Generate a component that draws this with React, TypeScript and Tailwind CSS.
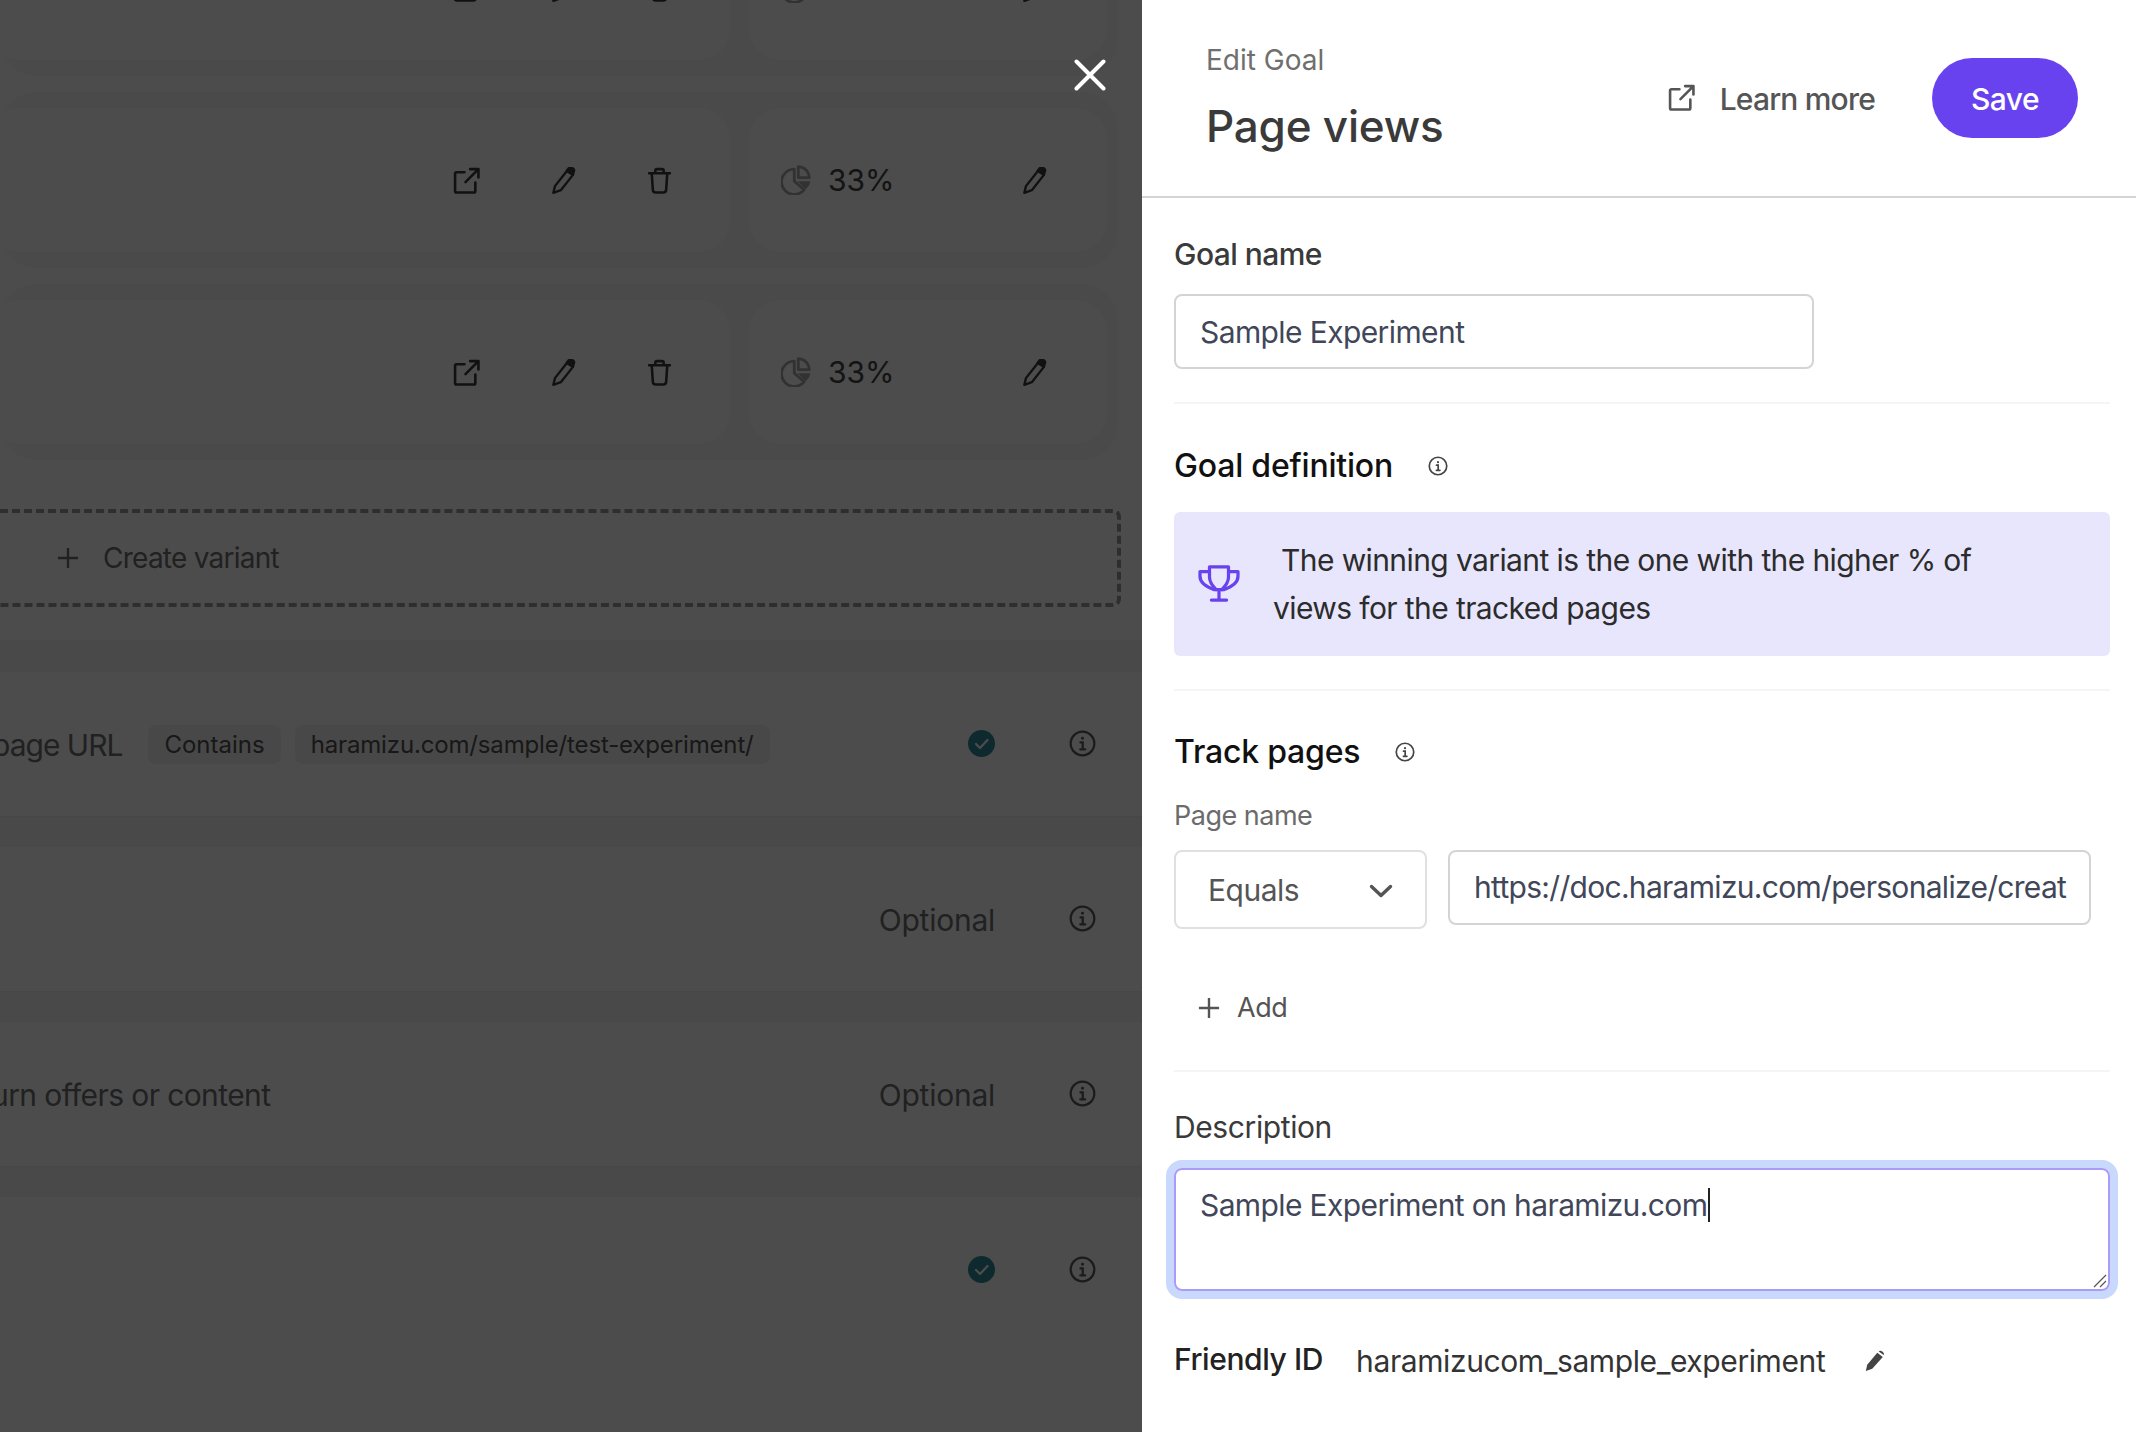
import React from 'react';

const PencilIcon = ({ className }: { className?: string }) => (
  <svg viewBox="0 0 24 24" className={className} fill="none" stroke="currentColor" strokeWidth="2.1" strokeLinejoin="round">
    <path d="M3 23 L4.4 17 L15 3.5 L20.4 7 L9.6 20.6 Z" />
    <path d="M15 3.2 L16.6 1.2 C17.4 .4 18.8 .3 20.2 1.1 C21.6 2 21.8 3.2 21 4.4 L20.4 7 Z" fill="currentColor" />
  </svg>
);

const ExternalIcon = ({ className }: { className?: string }) => (
  <svg viewBox="0 0 26 26" className={className} fill="none" stroke="currentColor" strokeWidth="2.5" strokeLinecap="round" strokeLinejoin="round">
    <path d="M11 5 H3.5 Q2 5 2 6.5 V23 Q2 24.5 3.5 24.5 H20 Q21.5 24.5 21.5 23 V15" />
    <path d="M12 14.5 L24 2.5 M16.5 2 H24.5 V10" />
  </svg>
);

const TrashIcon = ({ className }: { className?: string }) => (
  <svg viewBox="0 0 24 26" className={className} fill="none" stroke="currentColor" strokeWidth="2.5" strokeLinecap="round" strokeLinejoin="round">
    <path d="M2 6 H22 M8 6 V3.5 Q8 2 9.5 2 H14.5 Q16 2 16 3.5 V6" />
    <path d="M4.5 6 L5.6 22 Q5.8 24.5 8.2 24.5 H15.8 Q18.2 24.5 18.4 22 L19.5 6" />
  </svg>
);

const PieIcon = ({ className }: { className?: string }) => (
  <svg viewBox="0 0 26 26" className={className} fill="none" stroke="currentColor" strokeWidth="2.4" strokeLinejoin="round">
    <path d="M11.5 3.5 A11 11 0 1 0 20 21.5 L11.5 14 Z" />
    <path d="M15 1.5 A9.5 9.5 0 0 1 24.5 11 H15 Z" />
    <path d="M14.5 14 H25.5 A11 11 0 0 1 21 21 Z" fill="currentColor" stroke="none" />
  </svg>
);

const InfoIcon = ({ className }: { className?: string }) => (
  <svg viewBox="0 0 24 24" className={className} fill="none" stroke="currentColor" strokeWidth="2" strokeLinecap="round">
    <circle cx="12" cy="12" r="10.5" />
    <path d="M10.2 11 H12.2 V17 M10 17.2 H14.4" />
    <circle cx="12" cy="7.4" r="1.3" fill="currentColor" stroke="none" />
  </svg>
);

const CheckBadge = () => (
  <svg viewBox="0 0 27 27" className="w-[27px] h-[27px]">
    <circle cx="13.5" cy="13.5" r="13.5" fill="#2f8e9c" />
    <path d="M8 14 L12 18 L19.5 10" fill="none" stroke="#fff" strokeWidth="2.2" strokeLinecap="round" strokeLinejoin="round" />
  </svg>
);

const PlusIcon = ({ className }: { className?: string }) => (
  <svg viewBox="0 0 24 24" className={className} fill="none" stroke="currentColor" strokeWidth="2.6">
    <path d="M12 1 V23 M1 12 H23" />
  </svg>
);

const VariantRow = () => (
  <div className="h-[176px] w-[1118px] py-4 pr-[11px] rounded-[36px] bg-[#f7f7f7] flex gap-[19px] shrink-0">
    <div className="w-[742px] h-[144px] ml-[-12px] rounded-[32px] bg-white flex items-center text-[#3a3a3a] pl-[12px]">
      <div className="flex items-center ml-[453px] gap-[70px]">
        <ExternalIcon className="w-[27px] h-[27px]" />
        <PencilIcon className="w-[27px] h-[27px]" />
        <TrashIcon className="w-[25px] h-[27px]" />
      </div>
    </div>
    <div className="w-[358px] h-[144px] rounded-[32px] bg-white flex items-center pl-[32px] pr-[59px]">
      <PieIcon className="w-[30px] h-[30px] text-[#a8a8a8]" />
      <span className="ml-[17px] text-[30px] leading-9 text-[#434343]">33%</span>
      <PencilIcon className="w-[27px] h-[27px] ml-auto text-[#3a3a3a]" />
    </div>
  </div>
);

const SettingRow = ({ children, last }: { children: React.ReactNode; last?: boolean }) => (
  <div className={`${last ? 'h-[233px]' : 'h-[145px] border-b border-[#ededed]'} bg-white pr-[46px]`}>
    <div className="h-[145px] flex items-center justify-between">{children}</div>
  </div>
);

const Background = () => (
  <div className="relative w-[1142px] h-[1432px] overflow-hidden bg-white shrink-0" style={{ fontFamily: 'Inter, sans-serif' }}>
    <div className="-mt-[100px] flex flex-col gap-4">
      <VariantRow />
      <VariantRow />
      <VariantRow />
    </div>
    <div className="mt-[49px] h-[98px] w-[1141px] -ml-[20px] rounded-lg border-4 border-dashed border-[#9a9a9a] flex items-center pl-[73px] text-[#707070]">
      <PlusIcon className="w-[22px] h-[22px]" />
      <span className="ml-[24px] text-[28px] leading-9 tracking-[-0.75px]">Create variant</span>
    </div>
    <div className="mt-[33px] pt-8 flex flex-col gap-[30px] bg-[#f6f6f6]">
      <SettingRow>
        <div className="flex items-center">
          <span className="text-[30px] leading-9 tracking-[-1px] text-[#707070] -ml-[8px]">page URL</span>
          <span className="ml-[26px] h-[39px] px-4 rounded-lg bg-[#f0f0f0] text-[24px] leading-[40px] text-[#505050]">Contains</span>
          <span className="ml-[14px] h-[39px] px-4 rounded-lg bg-[#f0f0f0] text-[24px] leading-[40px] tracking-[-0.15px] text-[#505050]">haramizu.com/sample/test-experiment/</span>
        </div>
        <div className="flex items-center gap-[74px] -mt-[2px]">
          <CheckBadge />
          <InfoIcon className="w-[27px] h-[27px] text-[#5c5c5c]" />
        </div>
      </SettingRow>
      <SettingRow>
        <span />
        <div className="flex items-center gap-[74px]">
          <span className="text-[30px] leading-9 tracking-[-0.25px] text-[#707070]">Optional</span>
          <InfoIcon className="w-[27px] h-[27px] text-[#5c5c5c] -mt-[3px]" />
        </div>
      </SettingRow>
      <SettingRow>
        <span className="text-[30px] leading-9 tracking-[-0.6px] text-[#707070] -ml-[9px]">urn offers or content</span>
        <div className="flex items-center gap-[74px]">
          <span className="text-[30px] leading-9 tracking-[-0.25px] text-[#707070]">Optional</span>
          <InfoIcon className="w-[27px] h-[27px] text-[#5c5c5c] -mt-[3px]" />
        </div>
      </SettingRow>
      <SettingRow last>
        <span />
        <div className="flex items-center gap-[74px]">
          <CheckBadge />
          <InfoIcon className="w-[27px] h-[27px] text-[#5c5c5c]" />
        </div>
      </SettingRow>
    </div>
    <div className="absolute inset-0 bg-black/70" />
    <svg viewBox="0 0 32 32" className="absolute left-[1074px] top-[59px] w-8 h-8" fill="none" stroke="#fff" strokeWidth="4" strokeLinecap="round">
      <path d="M2.5 2.5 L29.5 29.5 M29.5 2.5 L2.5 29.5" />
    </svg>
  </div>
);

const Divider = ({ className }: { className: string }) => <div className={`h-[2px] bg-[#f5f5f5] ${className}`} />;

const Panel = () => (
  <div className="flex-1 h-[1432px] bg-white overflow-hidden" style={{ fontFamily: 'Inter, sans-serif' }}>
    <header className="h-[198px] border-b-2 border-[#d4d4d4] flex items-start pl-[64px] pr-[58px]">
      <div>
        <div className="mt-[42px] text-[28px] leading-9 text-[#6f6f6f]">Edit Goal</div>
        <div className="mt-[21px] text-[44px] leading-[54px] tracking-[-0.2px] font-medium text-[#3a3a3a]">Page views</div>
      </div>
      <div className="ml-auto mt-[58px] flex items-center">
        <ExternalIcon className="w-[27px] h-[27px] text-[#555] -mt-[2px]" />
        <span className="ml-[25px] mt-[1px] text-[30px] leading-9 tracking-[-0.8px] font-medium text-[#555]">Learn more</span>
        <button className="ml-[57px] w-[146px] h-[80px] pt-[2px] rounded-full bg-[#6842ef] text-white text-[30px] tracking-[-0.5px] font-medium">Save</button>
      </div>
    </header>
    <div className="pl-8 pr-[26px]">
      <div className="mt-[38px] text-[30px] leading-9 tracking-[-0.55px] font-medium text-[#3a3a3a]">Goal name</div>
      <div className="mt-[22px] w-[640px] h-[75px] pt-[2px] rounded-lg border-2 border-[#d4d4d4] flex items-center pl-[24px] text-[30px] tracking-[-0.6px] text-[#414659]">Sample Experiment</div>
      <Divider className="mt-[33px]" />

      <div className="mt-[42px] flex items-center h-10">
        <span className="text-[32px] leading-10 tracking-[-0.2px] font-medium text-[#111]">Goal definition</span>
        <InfoIcon className="ml-[35px] w-5 h-5 text-[#444]" />
      </div>
      <div className="mt-[26px] h-[144px] rounded-md bg-[#e8e6fc] flex items-center pl-[24px] pr-[100px]">
        <svg viewBox="0 0 44 40" className="w-[42px] h-[38px] shrink-0 text-[#6842ef] -mt-[2px]" fill="none" stroke="currentColor" strokeWidth="3.4" strokeLinejoin="round" strokeLinecap="round">
          <path d="M12 3 H32 V8 H42 V13 C42 19 36 24 27 27 H17 C8 24 2 19 2 13 V8 H12 Z" />
          <path d="M12 8 V14 C12 20 16 24 19 27 M32 8 V14 C32 20 28 24 25 27" />
          <path d="M22 27 V38 M14 38 H30" />
        </svg>
        <p className="ml-[33px] indent-[8px] text-[30px] leading-[48px] tracking-[-0.6px] text-[#2c2c2c]">The winning variant is the one with the higher % of views for the tracked pages</p>
      </div>
      <Divider className="mt-[33px]" />

      <div className="mt-[41px] flex items-center h-10">
        <span className="text-[32px] leading-10 tracking-[-0.2px] font-medium text-[#111]">Track pages</span>
        <InfoIcon className="ml-[35px] w-5 h-5 text-[#444]" />
      </div>
      <div className="mt-[26px] text-[27px] leading-9 tracking-[-0.5px] text-[#6b6b6b]">Page name</div>
      <div className="mt-4 flex items-start gap-[21px]">
        <div className="w-[253px] h-[79px] pt-[2px] rounded-lg border-2 border-[#e0e0e0] flex items-center pl-[32px] pr-[32px] justify-between text-[30px] tracking-[-0.5px] text-[#555]">
          <span>Equals</span>
          <svg viewBox="0 0 24 14" className="w-6 h-[14px]" fill="none" stroke="currentColor" strokeWidth="3.4" strokeLinecap="round" strokeLinejoin="round">
            <path d="M2.5 2.5 L12 11.5 L21.5 2.5" />
          </svg>
        </div>
        <div className="w-[643px] h-[75px] rounded-lg border-2 border-[#d4d4d4] flex items-center pl-[24px] pr-[22px] text-[30px] tracking-[-0.7px] text-[#414659]">
          <div className="overflow-hidden whitespace-nowrap">https://doc.haramizu.com/personalize/create-experiment</div>
        </div>
      </div>
      <div className="mt-[61px] flex items-center pl-[24px] h-9 text-[#555]">
        <PlusIcon className="w-[22px] h-[22px]" />
        <span className="ml-[17px] text-[27px] leading-9 tracking-[-0.4px]">Add</span>
      </div>
      <Divider className="mt-[44px]" />

      <div className="mt-[37px] text-[30px] leading-9 tracking-[-0.4px] font-normal text-[#3a3a3a]">Description</div>
      <div className="relative mt-[23px] h-[123px] rounded-lg border-2 border-[#ab9bf9] ring-[8px] ring-[#c9d8fd] pl-[24px] pt-[17px]">
        <div className="flex items-center text-[30px] leading-9 tracking-[-0.62px] text-[#414659]">
          Sample Experiment on haramizu.com
          <span className="ml-[1px] w-[2px] h-[34px] bg-[#222]" />
        </div>
        <svg viewBox="0 0 14 14" className="absolute right-[1px] bottom-[1px] w-[14px] h-[14px]" fill="none" stroke="#555" strokeWidth="1.2">
          <path d="M1 13 L13 1 M7 13 L13 7" />
        </svg>
      </div>
      <div className="mt-[50px] flex items-center h-10">
        <span className="text-[30px] leading-10 tracking-[-0.4px] font-medium text-[#222] -mt-[4px]">Friendly ID</span>
        <span className="ml-[33px] text-[30px] leading-10 tracking-[-0.4px] text-[#333]">haramizucom_sample_experiment</span>
        <svg viewBox="0 0 24 24" className="ml-[39px] w-[22px] h-[22px] text-[#444]" fill="currentColor">
          <path d="M2 23 L3.5 16 L14.5 3 L20.5 7.5 L9 20.5 Z M16 1.5 C17 .5 18.5 .4 20 1.5 C21.8 2.8 22.2 4.5 21.5 5.5 Z" />
        </svg>
      </div>
    </div>
  </div>
);

export default function App() {
  return (
    <div className="flex w-[2136px] h-[1432px] overflow-hidden">
      <Background />
      <Panel />
    </div>
  );
}
